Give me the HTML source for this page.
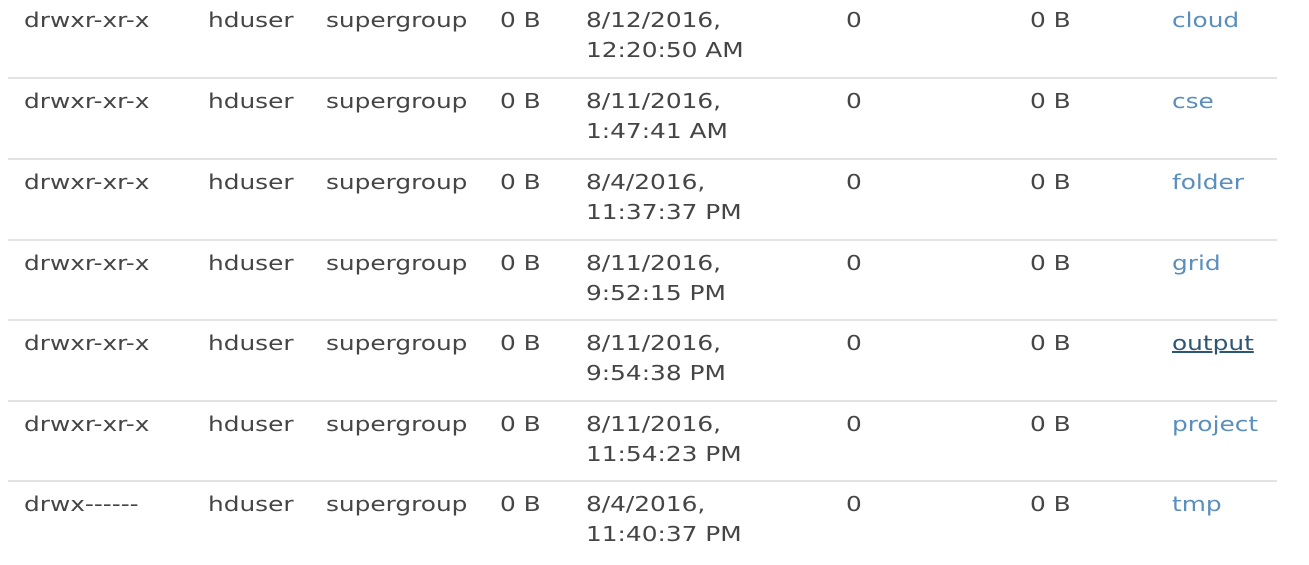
<!DOCTYPE html>
<html><head><meta charset="utf-8"><style>
body{margin:0;width:1309px;height:555px;background:#fff;position:relative;overflow:hidden;font-family:"DejaVu Sans","Liberation Sans",sans-serif;font-size:20px;color:#454545;}
.r{position:absolute;left:0;width:1309px;height:81px;}
.c{position:absolute;top:5px;line-height:30px;white-space:nowrap;transform:scaleX(1.24);transform-origin:0 0;}
.ln{position:absolute;left:8px;width:1269px;height:2px;background:#e3e3e3;}
.a{color:#5a8fbd}
.u{color:#2d5673;text-decoration:underline}
</style></head><body>
<div class="r" style="top:0"><span class="c" style="left:24px">drwxr-xr-x</span><span class="c" style="left:208px">hduser</span><span class="c" style="left:326px">supergroup</span><span class="c" style="left:500px">0 B</span><span class="c" style="left:586px">8/12/2016,<br>12:20:50 AM</span><span class="c" style="left:846px">0</span><span class="c" style="left:1030px">0 B</span><span class="c a" style="left:1172px">cloud</span></div>
<div class="ln" style="top:77px"></div>
<div class="r" style="top:81px"><span class="c" style="left:24px">drwxr-xr-x</span><span class="c" style="left:208px">hduser</span><span class="c" style="left:326px">supergroup</span><span class="c" style="left:500px">0 B</span><span class="c" style="left:586px">8/11/2016,<br>1:47:41 AM</span><span class="c" style="left:846px">0</span><span class="c" style="left:1030px">0 B</span><span class="c a" style="left:1172px">cse</span></div>
<div class="ln" style="top:158px"></div>
<div class="r" style="top:162px"><span class="c" style="left:24px">drwxr-xr-x</span><span class="c" style="left:208px">hduser</span><span class="c" style="left:326px">supergroup</span><span class="c" style="left:500px">0 B</span><span class="c" style="left:586px">8/4/2016,<br>11:37:37 PM</span><span class="c" style="left:846px">0</span><span class="c" style="left:1030px">0 B</span><span class="c a" style="left:1172px">folder</span></div>
<div class="ln" style="top:239px"></div>
<div class="r" style="top:243px"><span class="c" style="left:24px">drwxr-xr-x</span><span class="c" style="left:208px">hduser</span><span class="c" style="left:326px">supergroup</span><span class="c" style="left:500px">0 B</span><span class="c" style="left:586px">8/11/2016,<br>9:52:15 PM</span><span class="c" style="left:846px">0</span><span class="c" style="left:1030px">0 B</span><span class="c a" style="left:1172px">grid</span></div>
<div class="ln" style="top:319px"></div>
<div class="r" style="top:323px"><span class="c" style="left:24px">drwxr-xr-x</span><span class="c" style="left:208px">hduser</span><span class="c" style="left:326px">supergroup</span><span class="c" style="left:500px">0 B</span><span class="c" style="left:586px">8/11/2016,<br>9:54:38 PM</span><span class="c" style="left:846px">0</span><span class="c" style="left:1030px">0 B</span><span class="c u" style="left:1172px">output</span></div>
<div class="ln" style="top:400px"></div>
<div class="r" style="top:404px"><span class="c" style="left:24px">drwxr-xr-x</span><span class="c" style="left:208px">hduser</span><span class="c" style="left:326px">supergroup</span><span class="c" style="left:500px">0 B</span><span class="c" style="left:586px">8/11/2016,<br>11:54:23 PM</span><span class="c" style="left:846px">0</span><span class="c" style="left:1030px">0 B</span><span class="c a" style="left:1172px">project</span></div>
<div class="ln" style="top:480px"></div>
<div class="r" style="top:484px"><span class="c" style="left:24px">drwx------</span><span class="c" style="left:208px">hduser</span><span class="c" style="left:326px">supergroup</span><span class="c" style="left:500px">0 B</span><span class="c" style="left:586px">8/4/2016,<br>11:40:37 PM</span><span class="c" style="left:846px">0</span><span class="c" style="left:1030px">0 B</span><span class="c a" style="left:1172px">tmp</span></div>
</body></html>
